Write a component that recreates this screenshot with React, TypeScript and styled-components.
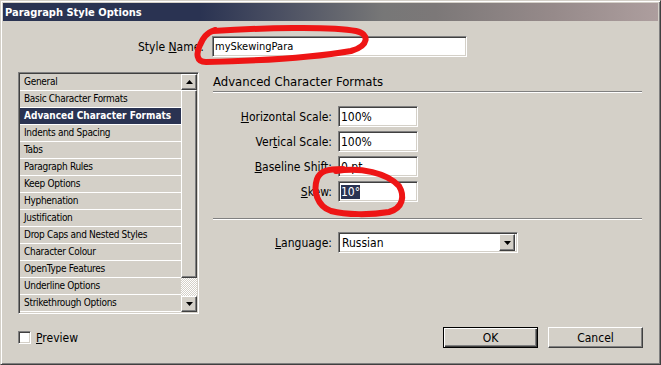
import React from "react";
import styled, { createGlobalStyle, css } from "styled-components";

const GlobalStyle = createGlobalStyle`
  html, body {
    margin: 0;
    padding: 0;
    background: #d4d0c8;
  }
  body {
    font-family: "DejaVu Sans Condensed", "DejaVu Sans", sans-serif;
    color: #000;
  }
`;

const raised = css`
  border: 1px solid;
  border-color: #fff #404040 #404040 #fff;
  box-shadow: inset -1px -1px #808080, inset 1px 1px #d4d0c8;
`;

const sunken = css`
  border: 1px solid;
  border-color: #808080 #fff #fff #808080;
  box-shadow: inset 1px 1px #404040, inset -1px -1px #d4d0c8;
`;

const Window = styled.div`
  position: relative;
  width: 661px;
  height: 365px;
  box-sizing: border-box;
  background: #d4d0c8;
  border: 1px solid;
  border-color: #d4d0c8 #404040 #404040 #d4d0c8;
  box-shadow: inset 1px 1px #fff, inset -1px -1px #808080;
  padding: 2px;
  display: flex;
  flex-direction: column;
`;

const TitleBar = styled.div`
  height: 18px;
  display: flex;
  align-items: center;
  padding-left: 2px;
  color: #fff;
  font-weight: bold;
  font-size: 11px;
  background: linear-gradient(
    90deg,
    #2a3352 0%,
    #2a3352 30%,
    #4a4f62 42%,
    #777777 58%,
    #7c7878 66%,
    #968a8a 84%,
    #ad9e9e 100%
  );
`;

const Body = styled.div`
  display: flex;
  flex-direction: column;
  padding-top: 15px;
  font-size: 12px;
`;

const NameRow = styled.div`
  display: flex;
  align-items: center;
  gap: 8px;
  height: 21px;
`;

const NameLabel = styled.label`
  width: 201px;
  text-align: right;
`;

const TextField = styled.div<{ $width: number; $size?: number }>`
  ${sunken};
  width: ${(p) => p.$width}px;
  height: 21px;
  box-sizing: border-box;
  background: #fff;
  display: flex;
  align-items: center;
  padding-left: 2px;
  font-size: ${(p) => p.$size ?? 12}px;
  white-space: nowrap;
`;

const Selected = styled.span`
  background: #2a3352;
  color: #fff;
`;

const MainRow = styled.div`
  display: flex;
  margin-top: 15px;
  padding-left: 15px;
  gap: 14px;
`;

const ListBox = styled.div`
  ${sunken};
  width: 181px;
  height: 242px;
  box-sizing: border-box;
  display: flex;
  padding: 1px;
`;

const Items = styled.div`
  flex: 1;
  display: flex;
  flex-direction: column;
`;

const Item = styled.div<{ $active?: boolean }>`
  height: 17px;
  box-sizing: border-box;
  border-bottom: 1px solid #fff;
  padding-left: 4px;
  font-size: 10px;
  letter-spacing: -0.3px;
  line-height: 16px;
  white-space: nowrap;
  ${(p) =>
    p.$active &&
    css`
      background: #2a3352;
      color: #fff;
      font-weight: bold;
      letter-spacing: 0;
    `}
`;

const ScrollBar = styled.div`
  width: 16px;
  display: flex;
  flex-direction: column;
`;

const ScrollButton = styled.div`
  ${raised};
  height: 16px;
  box-sizing: border-box;
  background: #d4d0c8;
  display: flex;
  align-items: center;
  justify-content: center;
`;

const Thumb = styled.div`
  ${raised};
  height: 188px;
  box-sizing: border-box;
  background: #d4d0c8;
`;

const Track = styled.div`
  flex: 1;
  background: repeating-conic-gradient(#fff 0 25%, #d4d0c8 0 50%) 0 0 / 2px 2px;
`;

const RightPanel = styled.div`
  width: 429px;
  display: flex;
  flex-direction: column;
`;

const SectionTitle = styled.div`
  height: 19px;
  line-height: 19px;
  font-size: 13px;
`;

const Divider = styled.div<{ $gap?: number }>`
  margin-top: ${(p) => p.$gap ?? 0}px;
  border-top: 1px solid #808080;
  border-bottom: 1px solid #fff;
`;

const Fields = styled.div`
  display: flex;
  flex-direction: column;
  gap: 4px;
  margin-top: 13px;
`;

const FieldRow = styled.div<{ $top?: number }>`
  display: flex;
  align-items: center;
  gap: 6px;
  height: 21px;
  margin-top: ${(p) => p.$top ?? 0}px;
`;

const FieldLabel = styled.label`
  width: 119px;
  text-align: right;
  white-space: nowrap;
`;

const SelectBox = styled.div`
  ${sunken};
  width: 180px;
  height: 21px;
  box-sizing: border-box;
  background: #fff;
  display: flex;
  align-items: center;
  padding: 2px;
`;

const SelectValue = styled.span`
  flex: 1;
  padding-left: 1px;
`;

const DropButton = styled(ScrollButton)`
  width: 16px;
  height: 17px;
`;

const Footer = styled.div`
  display: flex;
  align-items: center;
  height: 21px;
  margin-top: 13px;
  padding: 0 15px;
`;

const CheckLabel = styled.label`
  display: flex;
  align-items: center;
  gap: 5px;
  font-size: 12px;
`;

const CheckBox = styled.span`
  ${sunken};
  width: 13px;
  height: 13px;
  box-sizing: border-box;
  background: #fff;
`;

const Buttons = styled.div`
  margin-left: auto;
  display: flex;
  gap: 10px;
`;

const PushButton = styled.button<{ $default?: boolean }>`
  ${raised};
  width: 95px;
  height: 21px;
  box-sizing: border-box;
  background: #d4d0c8;
  font-family: inherit;
  font-size: 12px;
  padding: 0;
  color: #000;
  ${(p) =>
    p.$default &&
    css`
      border: 1px solid #000;
      box-shadow: inset 1px 1px #fff, inset -1px -1px #404040,
        inset -2px -2px #808080;
    `}
`;

const Ink = styled.svg`
  position: absolute;
  left: 0;
  top: 0;
  pointer-events: none;
`;

const Arrow = ({ down }: { down?: boolean }) => (
  <svg width="7" height="4" viewBox="0 0 7 4">
    <polygon points={down ? "0,0 7,0 3.5,4" : "0,4 7,4 3.5,0"} fill="#000" />
  </svg>
);

const items = [
  "General",
  "Basic Character Formats",
  "Advanced Character Formats",
  "Indents and Spacing",
  "Tabs",
  "Paragraph Rules",
  "Keep Options",
  "Hyphenation",
  "Justification",
  "Drop Caps and Nested Styles",
  "Character Colour",
  "OpenType Features",
  "Underline Options",
  "Strikethrough Options",
];

const App = () => {
  return (
    <>
      <GlobalStyle />
      <Window>
        <TitleBar>Paragraph Style Options</TitleBar>
        <Body>
          <NameRow>
            <NameLabel>
              Style <u>N</u>ame:
            </NameLabel>
            <TextField $width={255} $size={11}>
              mySkewingPara
            </TextField>
          </NameRow>

          <MainRow>
            <ListBox>
              <Items>
                {items.map((name) => (
                  <Item key={name} $active={name === "Advanced Character Formats"}>
                    {name}
                  </Item>
                ))}
              </Items>
              <ScrollBar>
                <ScrollButton>
                  <Arrow />
                </ScrollButton>
                <Thumb />
                <Track />
                <ScrollButton>
                  <Arrow down />
                </ScrollButton>
              </ScrollBar>
            </ListBox>

            <RightPanel>
              <SectionTitle>Advanced Character Formats</SectionTitle>
              <Divider />
              <Fields>
                <FieldRow>
                  <FieldLabel>
                    <u>H</u>orizontal Scale:
                  </FieldLabel>
                  <TextField $width={80}>100%</TextField>
                </FieldRow>
                <FieldRow>
                  <FieldLabel>
                    Ver<u>t</u>ical Scale:
                  </FieldLabel>
                  <TextField $width={80}>100%</TextField>
                </FieldRow>
                <FieldRow>
                  <FieldLabel>
                    <u>B</u>aseline Shift:
                  </FieldLabel>
                  <TextField $width={80}>0 pt</TextField>
                </FieldRow>
                <FieldRow>
                  <FieldLabel>
                    <u>S</u>kew:
                  </FieldLabel>
                  <TextField $width={80}>
                    <Selected>10°</Selected>
                  </TextField>
                </FieldRow>
              </Fields>
              <Divider $gap={16} />
              <FieldRow $top={12}>
                <FieldLabel>
                  <u>L</u>anguage:
                </FieldLabel>
                <SelectBox>
                  <SelectValue>Russian</SelectValue>
                  <DropButton>
                    <Arrow down />
                  </DropButton>
                </SelectBox>
              </FieldRow>
            </RightPanel>
          </MainRow>

          <Footer>
            <CheckLabel>
              <CheckBox />
              <span>
                <u>P</u>review
              </span>
            </CheckLabel>
            <Buttons>
              <PushButton $default>OK</PushButton>
              <PushButton>Cancel</PushButton>
            </Buttons>
          </Footer>
        </Body>

        <Ink width="661" height="365" viewBox="0 0 661 365">
          <path
            d="M 212 30 C 260 27, 330 25, 355 30 C 369 33, 368 45, 350 50 C 310 57, 250 60, 205 61 C 195 61, 195 52, 199 44 C 202 37, 205 32, 214 29"
            fill="none"
            stroke="#ee1515"
            strokeWidth="6"
            strokeLinecap="round"
            strokeLinejoin="round"
          />
          <path
            d="M 335 170 C 360 166, 386 172, 398 185 C 404 195, 402 207, 388 211 C 370 214, 345 214, 330 210 C 316 205, 312 190, 316 178 C 319 170, 326 168, 342 168"
            fill="none"
            stroke="#ee1515"
            strokeWidth="6"
            strokeLinecap="round"
            strokeLinejoin="round"
          />
        </Ink>
      </Window>
    </>
  );
};

export default App;
